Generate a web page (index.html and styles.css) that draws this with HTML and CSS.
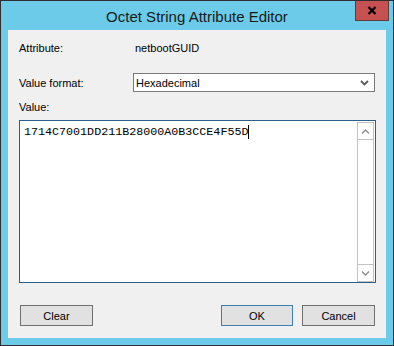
FILE: index.html
```html
<!DOCTYPE html>
<html lang="en">
<head>
    <meta charset="UTF-8">
    <title>Octet String Attribute Editor</title>
    <link rel="stylesheet" href="styles.css">
</head>
<body>
    <div class="window">
        <div class="titlebar">
            <span class="title">Octet String Attribute Editor</span>
            <div class="close-btn">
                <svg width="10" height="9" viewBox="0 0 10 9">
                    <path d="M1.5 1 L8.5 8 M8.5 1 L1.5 8" stroke="#000" stroke-width="2.2" fill="none"/>
                </svg>
            </div>
        </div>
        <div class="client">
            <div class="row row-attr">
                <span class="label">Attribute:</span>
                <span class="value">netbootGUID</span>
            </div>
            <div class="row row-format">
                <span class="label">Value format:</span>
                <div class="select">
                    <span>Hexadecimal</span>
                    <svg width="9" height="6" viewBox="0 0 9 6">
                        <path d="M1 1 L4.5 4.5 L8 1" stroke="#5a5a5a" stroke-width="1.8" fill="none"/>
                    </svg>
                </div>
            </div>
            <div class="value-label">Value:</div>
            <div class="textbox">
                <div class="text"><span>1714C7001DD211B28000A0B3CCE4F55D</span><span class="caret"></span></div>
                <div class="scrollbar">
                    <div class="sb-btn">
                        <svg width="9" height="5" viewBox="0 0 9 5">
                            <path d="M1 4.5 L4.5 1 L8 4.5" stroke="#8a8a8a" stroke-width="1.3" fill="none"/>
                        </svg>
                    </div>
                    <div class="sb-track"></div>
                    <div class="sb-btn">
                        <svg width="9" height="5" viewBox="0 0 9 5">
                            <path d="M1 0.5 L4.5 4 L8 0.5" stroke="#8a8a8a" stroke-width="1.3" fill="none"/>
                        </svg>
                    </div>
                </div>
            </div>
            <div class="buttons">
                <button class="btn">Clear</button>
                <div class="spacer"></div>
                <button class="btn btn-default">OK</button>
                <button class="btn">Cancel</button>
            </div>
        </div>
    </div>
</body>
</html>
```
FILE: styles.css
```css
* {
    margin: 0;
    padding: 0;
    box-sizing: border-box;
}

body {
    font-family: 'Liberation Sans', Arial, sans-serif;
    font-size: 11px;
    color: #000;
    background: #fff;
}

.window {
    width: 394px;
    height: 346px;
    border: 1px solid #2e2e2e;
    background: #6bcbe9;
    display: flex;
    flex-direction: column;
}

.titlebar {
    position: relative;
    height: 29px;
    display: flex;
    align-items: center;
    justify-content: center;
}

.title {
    font-size: 15px;
    color: #1a1a1a;
    margin-top: 1px;
}

.close-btn {
    position: absolute;
    top: 0;
    right: 4px;
    width: 34px;
    height: 20px;
    background: #c75050;
    border: 1px solid #5a3d3d;
    border-top: none;
    display: flex;
    align-items: center;
    justify-content: center;
}

.client {
    flex: 1;
    margin: 0 7px 7px 7px;
    background: #f0f0f0;
    padding: 12px 0 0 11px;
}

.row {
    display: flex;
    align-items: center;
}

.row-attr {
    height: 13px;
    line-height: 13px;
}

.label {
    width: 116px;
}

.row-format {
    margin-top: 18px;
}

.row-format .label {
    width: 114px;
}

.select {
    width: 242px;
    height: 19px;
    border: 1px solid #7a7a7a;
    background: #fff;
    display: flex;
    align-items: center;
    justify-content: space-between;
    padding: 0 5px 0 2px;
}

.value-label {
    margin-top: 9px;
    line-height: 13px;
}

.textbox {
    margin-top: 6px;
    width: 357px;
    height: 163px;
    border: 1px solid #2b5e8c;
    background: #fff;
    display: flex;
    justify-content: space-between;
    padding: 1px 1px 0 0;
}

.text {
    font-family: 'Liberation Mono', 'Courier New', monospace;
    font-size: 11.7px;
    line-height: 14px;
    padding: 3px 0 0 4px;
    display: flex;
    align-items: center;
    height: 17px;
}

.caret {
    display: inline-block;
    width: 1px;
    height: 14px;
    background: #000;
}

.scrollbar {
    width: 17px;
    height: 160px;
    border: 1px solid #c2c2c2;
    display: flex;
    flex-direction: column;
}

.sb-btn {
    height: 16px;
    display: flex;
    align-items: center;
    justify-content: center;
}

.sb-track {
    flex: 1;
    border-top: 1px solid #c2c2c2;
    border-bottom: 1px solid #c2c2c2;
}

.buttons {
    display: flex;
    margin-top: 22px;
    width: 356px;
    padding-left: 1px;
    gap: 9px;
}

.spacer {
    flex: 1;
}

.btn {
    width: 73px;
    height: 21px;
    border: 1px solid #707070;
    background: #e1e1e1;
    font-family: 'Liberation Sans', Arial, sans-serif;
    font-size: 11px;
    color: #000;
}

.btn-default {
    width: 72px;
    border-color: #3c7fb1;
}
```
